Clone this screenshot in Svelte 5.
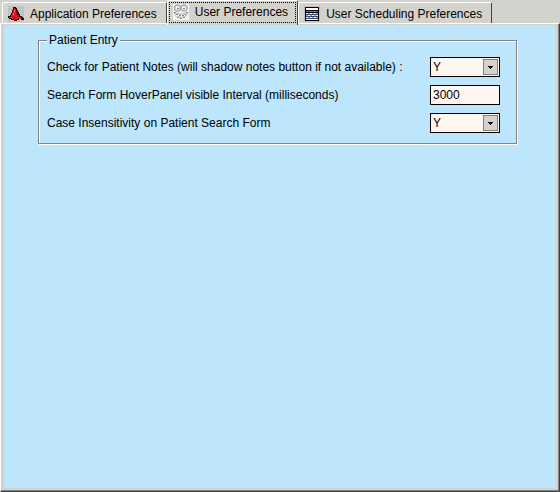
<script lang="ts">
	const tabs = [
		{ id: 'app', label: 'Application Preferences' },
		{ id: 'user', label: 'User Preferences' },
		{ id: 'schedule', label: 'User Scheduling Preferences' }
	];

	let active = $state('user');
	let notes = $state('Y');
	let interval = $state('3000');
	let insensitive = $state('Y');
</script>

{#snippet arrow()}
	<span class="arrow" aria-hidden="true">
		<svg width="5" height="3" viewBox="0 0 5 3" shape-rendering="crispEdges">
			<path d="M0 0h5v1H4v1H3v1H2V2H1V1H0z" />
		</svg>
	</span>
{/snippet}

<main class="window">
	<div class="tabs" role="tablist">
		{#each tabs as tab (tab.id)}
			<button
				class="tab"
				class:active={active === tab.id}
				role="tab"
				aria-selected={active === tab.id}
				onclick={() => (active = tab.id)}
			>
				<svg width="16" height="16" viewBox="0 0 16 16" shape-rendering="crispEdges" aria-hidden="true">
					{#if tab.id === 'app'}
						<rect width="16" height="16" fill="#c3c1c6" />
						<path
							d="M5 1h3v1h1v2h1v2h1v2h1v2h2v1h1v1h1v2h-3v-1h-2v1H9v1H6v-1H3v-1H1v-1H0v-2h2V9h1V7h1V4h1z"
							fill="#200000"
						/>
						<path d="M6 2h1v1h1v2h1v2h1v2h1v2h2v1h1v1h-3v-1h-1v1H9v1H6v-1H4v-1H1v-1h2V9h1V7h1V4h1z" fill="#ef1818" />
						<path d="M8 5h1v2h1v2h1v2H9V9H8zM4 10h2v1h3v1H6v-1H4zM7 13h2v1H7z" fill="#b50000" />
						<path d="M6 4h1v2H6zM5 7h1v2H5zM3 11h1v1H3z" fill="#ff6b6b" />
					{:else if tab.id === 'user'}
						<rect width="16" height="16" fill="#f7f7f7" />
						<g shape-rendering="auto" fill="none">
							<circle cx="4.5" cy="4" r="3" fill="#efefef" stroke="#adadad" stroke-width="1.5" />
							<circle cx="11" cy="4" r="3" fill="#efefef" stroke="#adadad" stroke-width="1.5" />
							<path d="M0 8h3q5 2 10 0h3l-2 4q-6 5-12 0z" fill="#cecece" />
						</g>
						<path
							d="M4 4h2v1H4zM10 4h2v1h-2zM1 8h2v1H1zM13 8h2v1h-2zM3 10h2v1H3zM6 11h2v1H6zM9 11h2v1H9zM12 10h1v1h-1zM4 13h2v1H4zM7 14h2v1H7zM10 13h2v1h-2z"
							fill="#848484"
						/>
						<path d="M5 11h1v1H5zM8 11h1v2H8zM11 11h1v1h-1zM3 11h1v1H3z" fill="#fff" />
					{:else}
						<rect width="16" height="16" fill="#c6c3c6" />
						<path d="M1 1h14v14H1z" fill="#000" />
						<path d="M2 2h12v2H2z" fill="#fff" />
						<path d="M2 5h12v1H2z" fill="#6b7b7b" />
						<path d="M2 8h12v1H2zM2 10h12v1H2zM2 12h12v1H2z" fill="#314a6b" />
						<path
							d="M2 7h2v1H2zM6 7h2v1H6zM10 7h2v1h-2zM4 9h2v1H4zM8 9h2v1H8zM12 9h2v1h-2zM2 11h2v1H2zM6 11h2v1H6zM10 11h2v1h-2z"
							fill="#fff"
						/>
						<path
							d="M4 7h2v1H4zM8 7h2v1H8zM12 7h2v1h-2zM2 9h2v1H2zM6 9h2v1H6zM10 9h2v1h-2zM4 11h2v1H4zM8 11h2v1H8zM12 11h2v1h-2z"
							fill="#63a5ff"
						/>
						<path d="M2 13h12v1H2z" fill="#fff" />
					{/if}
				</svg>
				<span>{tab.label}</span>
			</button>
		{/each}
	</div>

	<div class="frame" role="tabpanel">
		<div class="panel">
			<fieldset>
				<legend>Patient Entry</legend>
				<div class="row">
					<label for="notes">Check for Patient Notes (will shadow notes button if not available) :</label>
					<div class="combo">
						<select id="notes" bind:value={notes}>
							<option>Y</option>
							<option>N</option>
						</select>
						{@render arrow()}
					</div>
				</div>
				<div class="row">
					<label for="interval">Search Form HoverPanel visible Interval (milliseconds)</label>
					<input id="interval" type="text" bind:value={interval} />
				</div>
				<div class="row">
					<label for="insensitive">Case Insensitivity on Patient Search Form</label>
					<div class="combo">
						<select id="insensitive" bind:value={insensitive}>
							<option>Y</option>
							<option>N</option>
						</select>
						{@render arrow()}
					</div>
				</div>
			</fieldset>
		</div>
	</div>
</main>

<style>
	:global(body) {
		margin: 0;
		background: #d4d2cd;
	}

	.window {
		display: flex;
		flex-direction: column;
		min-height: 100vh;
		font: 12px/16px 'Liberation Sans', Arial, sans-serif;
		color: #000;
	}

	.tabs {
		display: flex;
		align-items: flex-start;
		height: 23px;
		padding-left: 2px;
	}

	.tab {
		display: flex;
		align-items: center;
		gap: 6px;
		box-sizing: border-box;
		height: 21px;
		margin: 2px 0 0;
		padding: 1px 9px 0 5px;
		border: 1px solid #fff;
		border-right-color: #424142;
		border-bottom: 0;
		border-radius: 2px 2px 0 0;
		background: #d4d2cd;
		font: inherit;
		color: inherit;
		white-space: nowrap;
	}

	/* the open tab is taller and covers the frame's top edge */
	.tab.active {
		position: relative;
		height: 25px;
		margin: 0;
		padding: 0 9px 2px 5px;
		outline: 1px dotted #000;
		outline-offset: -3px;
	}

	.frame {
		display: flex;
		flex: 1;
		padding: 1px 3px 3px;
		border: 1px solid #fff;
		border-right-color: #424142;
		border-bottom-color: #424142;
		box-shadow: inset -1px -1px 0 #848284;
	}

	.panel {
		flex: 1;
		padding: 8px 39px 8px 34px;
		background: #bde6fc;
	}

	fieldset {
		margin: 0;
		padding: 6px 16px 6px 8px;
		border: 1px solid #848284;
		box-shadow:
			1px 1px 0 #fff,
			inset 1px 1px 0 #fff;
	}

	legend {
		padding: 0 2px;
		background: #bde6fc;
		line-height: 14px;
	}

	.row {
		display: flex;
		align-items: center;
		justify-content: space-between;
		height: 28px;
	}

	.combo {
		position: relative;
		width: 70px;
		height: 20px;
	}

	select,
	input {
		appearance: none;
		box-sizing: border-box;
		width: 70px;
		height: 20px;
		margin: 0;
		padding: 0 2px;
		border: 1px solid #000;
		border-radius: 0;
		background: #fff7ef;
		font: inherit;
		color: inherit;
	}

	.arrow {
		position: absolute;
		top: 2px;
		right: 2px;
		display: flex;
		align-items: center;
		justify-content: center;
		box-sizing: border-box;
		width: 15px;
		height: 16px;
		border: 1px solid #848284;
		background: #d4d2cd;
		pointer-events: none;
	}
</style>
